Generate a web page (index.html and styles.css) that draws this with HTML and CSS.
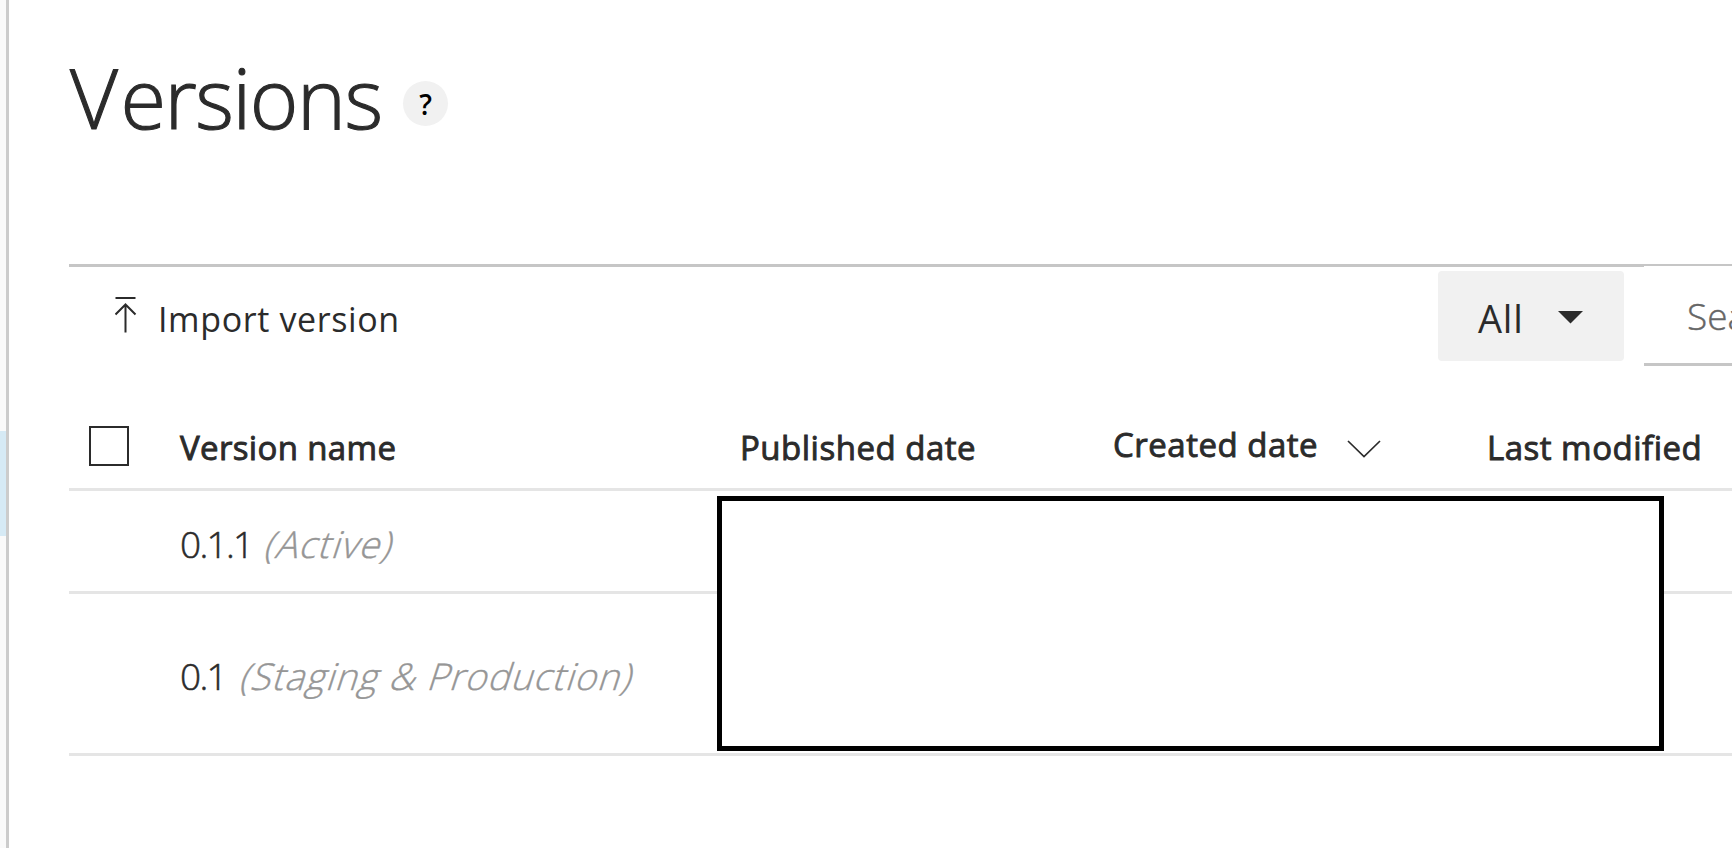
FILE: index.html
```html
<!DOCTYPE html>
<html lang="en">
<head>
<meta charset="utf-8">
<title>Versions</title>
<link rel="stylesheet" href="styles.css">
</head>
<body>
<div class="app">
  <aside class="sidebar"><div class="sidebar-active"></div></aside>
  <main class="content">
    <header class="page-header">
      <h1 class="title"><span class="cap">V</span>ersions</h1>
      <button class="help">?</button>
    </header>
    <div class="toolbar">
      <button class="import">
        <svg class="import-icon" width="22" height="36" viewBox="0 0 22 36" fill="none" stroke="#2b2b2b" stroke-width="2"><path d="M.5 1h20M10.500 35.500V7M.5 17.500L10.500 7.500L20.500 17.500"/></svg>
        <span class="import-label">Import version</span>
      </button>
      <button class="filter">
        <span class="filter-label">All</span>
        <svg class="caret" width="25" height="13" viewBox="0 0 25 13"><path d="M0 0h25L12.500 12.500z" fill="#2b2b2b"/></svg>
      </button>
      <div class="search"><span class="search-label">Sea</span></div>
    </div>
    <section class="table">
      <div class="row head">
        <div class="cell-check"><span class="checkbox"></span></div>
        <div class="cell"><span class="h-name">Version name</span></div>
        <div class="cell"><span class="h-pub">Published date</span></div>
        <div class="cell sorted"><span class="h-created">Created date</span>
          <svg class="chevron" width="34" height="18" viewBox="0 0 34 18" fill="none" stroke="#2b2b2b" stroke-width="1.700"><path d="M1 1L17 16.500L33 1"/></svg>
        </div>
        <div class="cell"><span class="h-mod">Last modified</span></div>
      </div>
      <div class="row first">
        <div class="cell-check"></div>
        <div class="cell name"><span class="num">0.1.1</span><span class="status active">(Active)</span></div>
      </div>
      <div class="row second">
        <div class="cell-check"></div>
        <div class="cell name"><span class="num">0.1</span><span class="status staging">(Staging &amp; Production)</span></div>
      </div>
      <div class="cover"></div>
    </section>
  </main>
</div>
</body>
</html>
```
FILE: styles.css
```css
* { box-sizing: border-box; }
body { margin: 0; background: #fff; color: #2b2b2b; font-family: "Open Sans", "Noto Sans", sans-serif; overflow: hidden; }
button { border: 0; background: none; padding: 0; margin: 0; font: inherit; color: inherit; }
span { white-space: nowrap; }
svg { display: block; flex: none; }
.app { display: flex; width: 1732px; height: 848px; overflow: hidden; }
.sidebar { flex: none; width: 9px; padding-top: 431px; background: #fafafa; border-right: 3px solid #ccc; }
.sidebar-active { height: 105px; background: #d6eaf5; }
.content { flex: none; width: 1723px; padding-left: 60px; }
.page-header { display: flex; height: 264px; }
.title { margin: 37px 0 0 1px; width: 333px; height: 120px; line-height: 120px; font-size: 83px; font-weight: 300; font-kerning: none; letter-spacing: -1.500px; -webkit-text-stroke: 1.100px #2b2b2b; white-space: nowrap; }
.cap { letter-spacing: 2.500px; }
.help { flex: none; width: 45px; height: 45px; margin-top: 81px; border-radius: 50%; background: #f1f1f1; color: #000; font-size: 28px; font-weight: 600; line-height: 47px; text-align: center; }
.toolbar { display: flex; height: 112px; border-top: 3px solid #c6c6c6; }
.import { display: flex; width: 1369px; padding-left: 46px; text-align: left; }
.import-icon { margin-top: 30px; }
.import-label { margin: 27px 0 0 21px; font-size: 34px; line-height: 50px; letter-spacing: .620px; }
.filter { display: flex; flex: none; width: 186px; height: 90px; margin-top: 4px; padding-left: 40px; border-radius: 4px; background: #f1f1f1; }
.filter-label { width: 80px; line-height: 50px; margin-top: 22px; font-size: 38px; letter-spacing: .800px; text-align: left; }
.caret { margin-top: 40px; }
.search { flex: none; width: 88px; height: 100px; margin: -1px 0 0 20px; padding: 25px 0 0 43px; overflow: hidden; background: #fff; border-bottom: 3px solid #c6c6c6; }
.search-label { font-size: 37px; line-height: 50px; font-weight: 300; color: #666; -webkit-text-stroke: .400px #666; }
.table { position: relative; }
.row { display: grid; grid-template-columns: 111px 560px 373px 374px 245px; border-bottom: 3px solid #e5e5e5; }
.head { height: 115px; font-size: 33px; line-height: 50px; font-weight: 400; letter-spacing: .500px; -webkit-text-stroke: .900px #2b2b2b; }
.h-name { letter-spacing: .350px; }
.cell { padding-top: 47px; }
.checkbox { display: block; width: 40px; height: 40px; margin: 50px 0 0 20px; border: 2px solid #2b2b2b; }
.sorted { display: flex; padding-top: 44px; }
.h-created { width: 234px; }
.chevron { margin-top: 20px; }
.name { display: flex; font-size: 37px; line-height: 50px; font-weight: 300; }
.first { height: 103px; }
.second { height: 162px; }
.first .cell { padding-top: 28px; }
.second .cell { padding-top: 57px; }
.num { letter-spacing: -1.700px; -webkit-text-stroke: .500px #2b2b2b; }
.first .num { width: 78px; }
.second .num { width: 46px; }
.status { color: #969696; letter-spacing: 1px; -webkit-text-stroke: .400px #969696; transform: skewX(-18deg); transform-origin: 0 75%; }
.active { letter-spacing: 1.200px; }
.cover { position: absolute; left: 648px; top: 120px; width: 947px; height: 255px; background: #fff; border: 5px solid #000; }
```
